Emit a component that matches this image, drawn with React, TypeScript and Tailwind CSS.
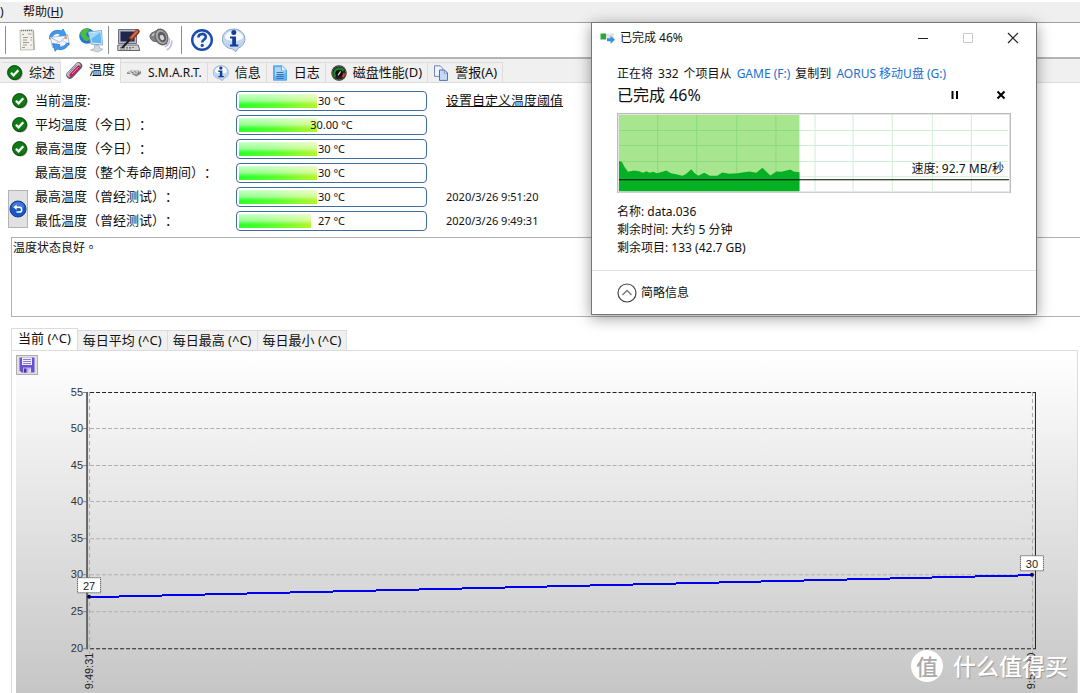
import type { ReactNode } from "react";

const ui = "font-['Noto_Sans','Noto_Sans_CJK_SC',sans-serif]";

/* ---------- icons ---------- */

const CheckIcon = () => (
    <svg width="16" height="16" viewBox="0 0 17 17" aria-hidden="true">
        <circle cx="9" cy="9" r="7.6" fill="#444" opacity=".6" />
        <circle cx="8" cy="8" r="7.4" fill="#0b7d14" stroke="#043d08" strokeWidth="1" />
        <path d="M4.2 8.2 7 11l5-5.4" fill="none" stroke="#fff" strokeWidth="2.4" />
    </svg>
);

const ClipIcon = () => (
    <svg width="17" height="17" viewBox="0 0 17 17" aria-hidden="true">
        <path d="M4 13 12.5 4" stroke="#5d5d6a" strokeWidth="7.5" strokeLinecap="round" />
        <path d="M3.5 12.5 12 3.5" stroke="#c3c3cc" strokeWidth="5" strokeLinecap="round" />
        <path d="M5 13.2 12.8 5" stroke="#c9185d" strokeWidth="3.4" strokeLinecap="round" />
        <path d="M6 12 12.5 5.2" stroke="#f08bb2" strokeWidth="1" />
        <path d="M2.8 11.4 10.5 3" stroke="#77777f" strokeWidth=".9" />
    </svg>
);

const DriveIcon = () => (
    <svg width="16" height="16" viewBox="0 0 17 16" aria-hidden="true">
        <path d="M1 7.2 6 4.6l10 1.2v3L11 11.6 6 9 1 9z" fill="#8d8d8d" />
        <path d="M1 7.2 6 4.6l10 1.2L11 9z" fill="#d5d5d5" />
        <path d="M5 6.5 8 8M9 5.8l2 2.2M13 6v3" stroke="#666" />
        <circle cx="5.5" cy="8.8" r="1" fill="#eee" />
    </svg>
);

const InfoIcon = ({ size }: { size: number }) => (
    <svg width={size} height={size} viewBox="0 0 24 24" aria-hidden="true">
        <path d="M12 1a11 10 0 0 1 4 19.3L14.2 23.5 10.5 21A11 10 0 0 1 12 1z" fill="#c4d9ef" stroke="#8ba5c2" strokeWidth="1" />
        <path d="M3 9a9.2 8 0 0 1 18 0c0 5-18 5-18 0z" fill="#fafdff" />
        <path d="M4 14c3 5 13 5 16 0-1 6-15 6-16 0z" fill="#9dc3ea" />
        <circle cx="11.8" cy="4.6" r="2.5" fill="#123f9c" />
        <path d="M8 8.4h6v8h2.2v2H8v-2h2.2v-6H8z" fill="#123f9c" />
    </svg>
);

const LogIcon = () => (
    <svg width="16" height="16" viewBox="0 0 16 16" aria-hidden="true">
        <path d="M1.5.8h8.7l4.3 4.4v10H1.5z" fill="#64b1f2" stroke="#5aa6ea" />
        <path d="M3 2.3h6v4h4.2v2L3 11z" fill="#a9d7fb" />
        <path d="M10 1v4.4h4.2z" fill="#e2f2ff" />
        <path d="M4.5 7.5h7M4.5 9.5h7M4.5 11.5h7M4.5 13.5h7" stroke="#3d6fb5" />
    </svg>
);

const GaugeIcon = () => (
    <svg width="16" height="16" viewBox="0 0 16 16" aria-hidden="true">
        <circle cx="8" cy="8" r="7.7" fill="#222" />
        <circle cx="8" cy="8" r="6.9" fill="none" stroke="#777" strokeWidth=".7" />
        <path d="M4.3 12A5.2 5.2 0 1 1 12.6 5.6" fill="none" stroke="#118a22" strokeWidth="2.2" />
        <path d="M13.2 8.2a5.2 5.2 0 0 1-1.8 3.8" fill="none" stroke="#e33a2a" strokeWidth="2" />
        <circle cx="8" cy="8.5" r="3.3" fill="#0b0b0b" />
        <path d="m7 10.4 2.6-4" stroke="#ddd" strokeWidth="1.2" />
    </svg>
);

const CopyIcon = () => (
    <svg width="16" height="16" viewBox="0 0 16 16" aria-hidden="true">
        <path d="M1.5.8h5.7l2.5 2.6v8H1.5z" fill="#eef3fd" stroke="#6d86bd" />
        <path d="M6.5 5h5l3 3v7.4h-8z" fill="#c4d9f8" stroke="#5470ad" />
        <path d="M11.3 5v3.2h3.2z" fill="#fff" stroke="#5470ad" strokeWidth=".7" />
    </svg>
);

const ReportIcon = () => (
    <svg width="24" height="24" viewBox="0 0 24 24" aria-hidden="true">
        <path d="M5 2.5 18 2l.8 19.8L5.6 22z" fill="#f1f1ea" stroke="#b9b9aa" strokeWidth=".9" />
        <path d="M18.5 2.5 19.3 22" stroke="#a3a394" />
        <path d="M6 2.5h12" stroke="#77776c" strokeWidth="1.6" strokeDasharray="1 1" />
        <path d="M7 6.5h2M13 6h3.5M8 9.5h5M8 12h4M8 14.5h6M8 17h4M7 19.5h3" stroke="#9c9c95" />
        <path d="M15.5 9.5H17M15.5 12H17M15.5 17H17" stroke="#c09a78" />
    </svg>
);

const SyncMailIcon = () => (
    <svg width="24" height="24" viewBox="0 0 24 24" aria-hidden="true">
        <path d="M2.5 11C2 4.5 8 .8 14.5 3L16 1l3.5 6.5-7.5.5 1.3-2C9 4.6 5 7 5.2 11z" fill="#3d9cf0" stroke="#1f6cc9" strokeWidth=".7" />
        <path d="M3.5 9.5 20.500 6.500l2 10.500L5.500 19.500z" fill="#f4f6fb" stroke="#b3bfd3" />
        <path d="M5.500 19.500 11 14M22.500 17 15.500 12.500" stroke="#c5cede" />
        <path d="m3.500 9.500 9.500 5 7.500-8" fill="none" stroke="#aab7cc" />
        <rect x="17.500" y="8.500" width="2.500" height="2.500" fill="#dd9a78" />
        <path d="M13 6.500 11.500 8.500 19.500 8 16 1.200z" fill="#3d9cf0" />
        <path d="M22 15c-1.500 5.500-7.500 8-12 6l-1.800 2.300L5.500 15.500l7.500 1.300-1.500 2c4 1.200 6.500-.8 7.600-3.300z" fill="#3d9cf0" stroke="#1f6cc9" strokeWidth=".7" />
    </svg>
);

const NetworkIcon = () => (
    <svg width="26" height="26" viewBox="0 0 26 26" aria-hidden="true">
        <circle cx="9" cy="9" r="7.8" fill="#2477d0" />
        <path d="M3 4.5C5 1.5 9 1 11 1.7 12 4.5 8 5.5 8 7.5s4 2 3 5-5 1-6-1-4-3-2-7z" fill="#4dbb3c" />
        <path d="m10.5 5 13-1.5 1 14.5L13 17z" fill="#d7ebfa" stroke="#86abce" />
        <path d="m12 6.5 10.5-1.2.8 11L14 15.5z" fill="#62b8f4" />
        <path d="m12 6.5 10.5-1.2L13 12z" fill="#a5d9fb" />
        <path d="m16.5 18 4.5.3.5 2.7 3.5 1.3-5 2.7-7.5-2 4-1.6z" fill="#d4d9df" stroke="#a1aab5" strokeWidth=".7" />
    </svg>
);

const TestIcon = () => (
    <svg width="24" height="24" viewBox="0 0 24 24" aria-hidden="true">
        <path d="M1.5 1.5h18v14h-18z" fill="#b7bac4" stroke="#6d6f7c" />
        <path d="M3.5 3.5h14v10h-14z" fill="#20264c" />
        <path d="M.8 17h20.4l1.6 5.5H.8z" fill="#cfcfd4" stroke="#66666e" />
        <path d="M3 19.5h14M3 21h12" stroke="#77777f" strokeDasharray="2 1" />
        <path d="M14 10.5 20.5 3.5" stroke="#8a3318" strokeWidth="4.6" strokeLinecap="round" />
        <path d="M14.5 9.5 20 3.5" stroke="#d86a3d" strokeWidth="2.2" strokeLinecap="round" />
        <path d="M13 11.5 5 20" stroke="#1d1d22" strokeWidth="2" />
    </svg>
);

const SpeakerIcon = () => (
    <svg width="24" height="24" viewBox="0 0 24 24" aria-hidden="true">
        <path d="M1 8.5C1 6 2.5 4.5 5 4L10 1l8 15-9.5-2.5C4 14 1.5 12 1 8.5z" fill="#838387" stroke="#5e5e62" />
        <path d="M3 7.5 9 4" stroke="#c6c6ca" strokeWidth="1.5" />
        <ellipse cx="12.5" cy="9" rx="6" ry="8" transform="rotate(-24 12.5 9)" fill="#a9a9ad" stroke="#66666a" strokeWidth="1.4" />
        <ellipse cx="13" cy="9" rx="3.9" ry="5.5" transform="rotate(-24 13 9)" fill="#5c5c60" />
        <ellipse cx="13" cy="9.5" rx="2" ry="2.8" transform="rotate(-24 13 9.5)" fill="#d6d6da" />
        <path d="M20.3 10c.6 4-1 7.5-4.6 9M22.8 12.5c.2 4.2-1.5 7.5-5 9.5" fill="none" stroke="#c0c0dc" strokeWidth="1.6" />
    </svg>
);

const HelpIcon = () => (
    <svg width="24" height="24" viewBox="0 0 24 24" aria-hidden="true">
        <circle cx="12" cy="12" r="9.8" fill="#f4f8fe" stroke="#1c4cab" strokeWidth="2.4" />
        <path d="M8.4 9.6c0-4.800 7.400-4.800 7.400-.6 0 2.800-3.600 2.800-3.600 5.400" fill="none" stroke="#1c4cab" strokeWidth="2.6" />
        <circle cx="12.2" cy="17.4" r="1.6" fill="#1c4cab" />
    </svg>
);

const UndoIcon = () => (
    <svg width="18" height="18" viewBox="0 0 18 18" aria-hidden="true">
        <circle cx="9" cy="9" r="8" fill="#1b56c4" stroke="#0c3c97" />
        <path d="M2.5 7a6.7 6.7 0 0 1 13 0c-4 2-9 2-13 0z" fill="#3f79da" />
        <path d="M6 7.2h4.3a2.4 2.4 0 0 1 0 4.900H7.500" fill="none" stroke="#fff" strokeWidth="1.5" />
        <path d="M7.6 4.5 4.5 7.2l3.1 2.7z" fill="#fff" />
    </svg>
);

const SaveIcon = () => (
    <svg width="16" height="16" viewBox="0 0 16 16" aria-hidden="true">
        <path d="M.5.5h15v15H2.5l-2-2z" fill="#6a4fd0" />
        <path d="M3 .5h10V8H3z" fill="#f1eefc" />
        <path d="M4 2.5h8M4 4.5h8M4 6.5h8" stroke="#8f7fdc" />
        <path d="M4 10.5h8v5H4z" fill="#b9b3e2" />
        <path d="M5 11.5h2.5v4H5z" fill="#4a32a8" />
        <path d="m8.5 15.5 3.5-5v5z" fill="#e4e1f6" />
    </svg>
);

const TransferIcon = () => (
    <svg width="16" height="14" viewBox="0 0 16 14" aria-hidden="true">
        <path d="M5 2.5h9v5H5z" fill="#dfe3e8" />
        <path d="M.5 2.5h5.5v6H.5z" fill="#27ab35" />
        <path d="M7 7.3h3.5V4.8L15 8.7l-4.5 4v-2.5H7z" fill="#3391e0" />
    </svg>
);

/* ---------- toolbar ---------- */

const Divider = () => <div className="h-7 w-px bg-[#8c8c8c]" />;

const ToolButton = ({ label, children }: { label: string; children: ReactNode }) => (
    <button type="button" aria-label={label} className="flex h-7 w-8 items-center justify-center">
        {children}
    </button>
);

const mainTabs = [
    { label: "综述", icon: <CheckIcon /> },
    { label: "温度", icon: <ClipIcon />, active: true },
    { label: "S.M.A.R.T.", icon: <DriveIcon />, small: true },
    { label: "信息", icon: <InfoIcon size={16} /> },
    { label: "日志", icon: <LogIcon /> },
    { label: "磁盘性能(D)", icon: <GaugeIcon /> },
    { label: "警报(A)", icon: <CopyIcon /> },
];

/* ---------- temperature rows ---------- */

const rows = [
    { label: "当前温度:", value: "30 °C", fill: 42, ok: true, link: "设置自定义温度阈值" },
    { label: "平均温度（今日）：", value: "30.00 °C", fill: 42, ok: true },
    { label: "最高温度（今日）：", value: "30 °C", fill: 42, ok: true },
    { label: "最高温度（整个寿命周期间）：", value: "30 °C", fill: 42 },
    { label: "最高温度（曾经测试）：", value: "30 °C", fill: 42, date: "2020/3/26 9:51:20", undo: true },
    { label: "最低温度（曾经测试）：", value: "27 °C", fill: 39, date: "2020/3/26 9:49:31" },
];

function Readings() {
    return (
        <div className="grid auto-rows-[24px] grid-cols-[20px_194px_191px_1fr] items-center gap-x-[7px] pt-1.5 pl-2 text-[13px] whitespace-nowrap">
            {rows.map((row, i) => (
                <div key={row.label} className="contents">
                    {row.undo ? (
                        <button
                            type="button"
                            aria-label="重置"
                            className="row-span-2 flex h-[38px] w-5 items-center justify-center border border-[#b4b4b4] bg-[#e1e1e1]"
                        >
                            <UndoIcon />
                        </button>
                    ) : (
                        i < 4 && <div className="flex justify-end">{row.ok && <CheckIcon />}</div>
                    )}
                    <span className="col-start-2 [text-spacing-trim:space-all]">{row.label}</span>
                    <div
                        role="meter"
                        aria-label={row.label}
                        aria-valuenow={parseFloat(row.value)}
                        className="relative h-5 rounded-[4px] border border-[#3f6d9e] p-0.5"
                    >
                        <div
                            className="h-full bg-[linear-gradient(to_bottom,rgba(255,255,255,0.75),rgba(255,255,255,0.5)_45%,transparent_75%),linear-gradient(to_right,#2dff2d,#5cff2d_50%,#b4f72d)]"
                            style={{ width: `${row.fill}%` }}
                        />
                        <span className="absolute inset-0 flex items-center justify-center text-[11px]">{row.value}</span>
                    </div>
                    <div className="pl-3">
                        {row.link && <a href="#threshold" className="underline">{row.link}</a>}
                        {row.date && <span className="text-[11px]">{row.date}</span>}
                    </div>
                </div>
            ))}
        </div>
    );
}

/* ---------- temperature chart ---------- */

const ticks = [55, 50, 45, 40, 35, 30, 25, 20];
const tickY = (t: number) => Math.floor(16 + ((55 - t) * 256) / 35) + 0.5;

const Flag = ({ x, y, value }: { x: number; y: number; value: number }) => (
    <g>
        <rect x={x} y={y} width="23" height="15" fill="#fff" stroke="#333" strokeDasharray="1 1" />
        <text x={x + 11.5} y={y + 12} textAnchor="middle" fill="#222">{value}</text>
    </g>
);

function Chart() {
    return (
        <svg viewBox="0 0 1060 317" className="block w-full font-['Liberation_Sans',Arial,sans-serif] text-[11px]" role="img" aria-label="温度曲线">
            {ticks.map((t) => {
                const edge = t === 55 || t === 20;
                return (
                    <g key={t}>
                        <text x="67" y={tickY(t) + 3.5} textAnchor="end" fill="#333">{t}</text>
                        <path d={`M67 ${tickY(t)}h5`} stroke="#888" />
                        <path d={`M74 ${tickY(t)}H1018`} stroke={edge ? "#222" : "#b0b0b0"} strokeDasharray="4 2" />
                    </g>
                );
            })}
            <path d="M73.5 16v262M1015.5 16v262" stroke="#aaa" strokeDasharray="4 3" />
            <path d="M71 16v257" stroke="#666" strokeWidth="2" />
            <path d="M1018.5 16v257" stroke="#222" />
            <path d="M73 221 1015 199" stroke="#0000f0" strokeWidth="2" shapeRendering="crispEdges" />
            <circle cx="73" cy="220.5" r="2" fill="#000060" />
            <circle cx="1015" cy="198.5" r="2" fill="#000060" />
            <Flag x={61.5} y={201.5} value={27} />
            <Flag x={1003.5} y={179.5} value={30} />
            <text transform="translate(77 313) rotate(-90)" fill="#222">9:49:31</text>
            <text transform="translate(1018 313) rotate(-90)" fill="#222">9:51:20</text>
        </svg>
    );
}

const chartTabs = ["当前 (^C)", "每日平均 (^C)", "每日最高 (^C)", "每日最小 (^C)"];

/* ---------- copy dialog ---------- */

const wave =
    "M2 78V48L5 49Q7 54 11 58.7L17 57.3 22 58 26 59.7 29.3 58 32.7 59.7 36 58.7 40 60 49.3 57.3 53.7 60 59 61 65 62.7Q69 61 74 56 77 60 81 62.7L87 59.7 92.7 62.7H100L105 59.3 112 60.7 120 60 132 58.3 139 59.7 145 54.7 153 62.3 159 58.3 164 58.7 173 56.3 176 58.3 182 59V78z";

const gridX = [40.5, 79.5, 119.5, 158.5, 197.5, 235.5, 274.5, 314.5, 353.5];
const gridY = [17.5, 32.5, 48.5, 63.5];

function SpeedGraph() {
    return (
        <svg viewBox="0 0 393 80" className="block w-full text-[12px]" role="img" aria-label="速度">
            <rect x=".5" y=".5" width="392" height="79" fill="#fff" stroke="#bcbcbc" />
            <rect x="1.5" y="1.5" width="390" height="77" fill="none" stroke="#e4e4e4" />
            <rect x="2" y="2" width="180" height="76" fill="#a8e58f" />
            {gridX.map((x) => (
                <path key={x} d={`M${x} 2V78`} stroke={x < 182 ? "#8cda7c" : "#d0f0d4"} />
            ))}
            {gridY.map((y) => (
                <g key={y}>
                    <path d={`M2 ${y}H182`} stroke="#8cda7c" />
                    <path d={`M182 ${y}H390`} stroke="#d0f0d4" />
                </g>
            ))}
            <path d={wave} fill="#06b025" />
            <path d="M2 66.5H391" stroke="#000" />
            <text x="386" y="60" textAnchor="end" fill="#111">速度: 92.7 MB/秒</text>
        </svg>
    );
}

function CopyDialog() {
    return (
        <section
            aria-label="已完成 46%"
            className="absolute top-[22px] left-[591px] w-[446px] border border-[#777] bg-white text-[12px] leading-[18px] whitespace-nowrap shadow-[0_3px_14px_rgba(0,0,0,0.4)]"
        >
            <header className="flex h-[29px] items-center pr-px pl-2">
                <TransferIcon />
                <span className="ml-1 flex-1">已完成 46%</span>
                <button type="button" aria-label="最小化" className="flex w-[45px] justify-center">
                    <svg width="12" height="12" viewBox="0 0 12 12"><path d="M1 6.5h10" stroke="#222" /></svg>
                </button>
                <button type="button" aria-label="最大化" disabled className="flex w-[45px] justify-center">
                    <svg width="12" height="12" viewBox="0 0 12 12"><path d="M1.5 1.5h9v9h-9z" fill="none" stroke="#ccc" /></svg>
                </button>
                <button type="button" aria-label="关闭" className="flex w-[45px] justify-center">
                    <svg width="12" height="12" viewBox="0 0 12 12"><path d="m1 1 10 10M11 1 1 11" stroke="#222" strokeWidth="1.2" /></svg>
                </button>
            </header>
            <div className="px-[25px] pt-[13px]">
                <p className="flex gap-[5px]">
                    <span>正在将</span>
                    <span>332</span>
                    <span>个项目从</span>
                    <a href="#f" className="text-[#1a6fd0]">GAME (F:)</a>
                    <span>复制到</span>
                    <a href="#g" className="text-[#1a6fd0]">AORUS 移动U盘 (G:)</a>
                </p>
                <div className="mb-1.5 flex h-6 items-center">
                    <h2 className="flex-1 text-[16px]">已完成 46%</h2>
                    <button type="button" aria-label="暂停" className="flex w-5 justify-center">
                        <svg width="10" height="10" viewBox="0 0 10 10"><path d="M2.5 1v8M7 1v8" stroke="#000" strokeWidth="2" /></svg>
                    </button>
                    <button type="button" aria-label="取消" className="ml-[26px] flex w-5 justify-center">
                        <svg width="10" height="10" viewBox="0 0 10 10"><path d="m1.5 1.5 7 7M8.5 1.5l-7 7" stroke="#000" strokeWidth="2" /></svg>
                    </button>
                </div>
                <SpeedGraph />
                <div className="pt-2.5 pb-[13px]">
                    <p>名称: data.036</p>
                    <p>剩余时间: 大约 5 分钟</p>
                    <p>剩余项目: 133 (42.7 GB)</p>
                </div>
            </div>
            <footer className="border-t border-[#e3e3e3] px-[25px] pt-3 pb-[11px]">
                <button type="button" className="flex items-center gap-1">
                    <svg width="20" height="20" viewBox="0 0 20 20" aria-hidden="true">
                        <circle cx="10" cy="10" r="9" fill="none" stroke="#444" strokeWidth="1.2" />
                        <path d="m5.5 12 4.5-4.5 4.5 4.5" fill="none" stroke="#777" strokeWidth="1.4" />
                    </svg>
                    简略信息
                </button>
            </footer>
        </section>
    );
}

export default function App() {
    return (
        <div className={`relative flex h-screen flex-col overflow-hidden bg-white text-[#111] ${ui}`}>
            <nav className="mt-0.5 flex h-[21px] items-center border-b border-[#a0a0a0] bg-[#efefef] text-[12px]">
                <button type="button" className="w-[23px] text-left">)</button>
                <button type="button">帮助(<u>H</u>)</button>
            </nav>

            <div className="flex h-[34px] items-center pl-[5px]">
                <Divider />
                <div className="flex pl-[5px] pr-px">
                    <ToolButton label="报告"><ReportIcon /></ToolButton>
                    <ToolButton label="发送"><SyncMailIcon /></ToolButton>
                    <ToolButton label="网络"><NetworkIcon /></ToolButton>
                </div>
                <Divider />
                <div className="flex px-1">
                    <ToolButton label="测试"><TestIcon /></ToolButton>
                    <ToolButton label="声音"><SpeakerIcon /></ToolButton>
                </div>
                <Divider />
                <div className="flex pl-1">
                    <ToolButton label="帮助"><HelpIcon /></ToolButton>
                    <ToolButton label="信息"><InfoIcon size={24} /></ToolButton>
                </div>
            </div>

            {/* main tabs */}
            <div role="tablist" className="flex h-[26px] items-end border-t-2 border-[#b4b4b4] bg-[#f0f0f0] pl-0.5 text-[13px] whitespace-nowrap shadow-[inset_0_-1px_0_#dcdcdc]">
                {mainTabs.map((tab) => (
                    <button
                        key={tab.label}
                        type="button"
                        role="tab"
                        aria-selected={!!tab.active}
                        className={`flex items-center gap-1.5 border-r border-[#dcdcdc] px-[5px] ${tab.active ? "h-6 bg-white pb-0.5" : "h-[21px] border-t"}`}
                    >
                        {tab.icon}
                        <span className={tab.small ? "text-[12px]" : ""}>{tab.label}</span>
                    </button>
                ))}
            </div>

            <Readings />

            <textarea
                readOnly
                aria-label="状态"
                defaultValue="温度状态良好。"
                className="mt-1 ml-[11px] h-20 resize-none border border-r-0 border-[#b0b0b6] px-px font-['Noto_Sans_CJK_TC',sans-serif] text-[12px] leading-[18px]"
            />

            {/* chart tabs */}
            <div role="tablist" className="mt-[11px] ml-[11px] flex h-[22px] items-end text-[13px] whitespace-nowrap">
                {chartTabs.map((label, i) => (
                    <button
                        key={label}
                        type="button"
                        role="tab"
                        aria-selected={i === 0}
                        className={`border border-b-0 border-[#dcdcdc] ${i === 0 ? "h-[22px] bg-white px-1.5 pb-0.5" : "h-5 border-l-0 bg-[#f0f0f0] px-[5px]"}`}
                    >
                        {label}
                    </button>
                ))}
            </div>
            <div className="mr-0.5 ml-[11px] flex min-h-0 flex-1 flex-col border-x border-t border-[#dcdcdc] pt-0.5 pl-1">
                <div className="flex-1 bg-linear-to-b from-white to-[#c6c6c6] pt-0.5">
                    <button type="button" aria-label="保存" className="mb-px flex h-5 w-[22px] items-center justify-center border border-[#adadad] bg-[#e1e1e1]">
                        <SaveIcon />
                    </button>
                    <Chart />
                </div>
            </div>

            <CopyDialog />

            {/* watermark */}
            <div className="absolute right-3 bottom-[11px] flex items-center gap-2.5 text-[23px] leading-8 font-medium text-white [text-shadow:1px_1px_1px_#999]">
                <span className="flex size-8 items-center justify-center rounded-full bg-white text-[22px] text-[#aaa] [text-shadow:none]">值</span>
                什么值得买
            </div>
        </div>
    );
}
